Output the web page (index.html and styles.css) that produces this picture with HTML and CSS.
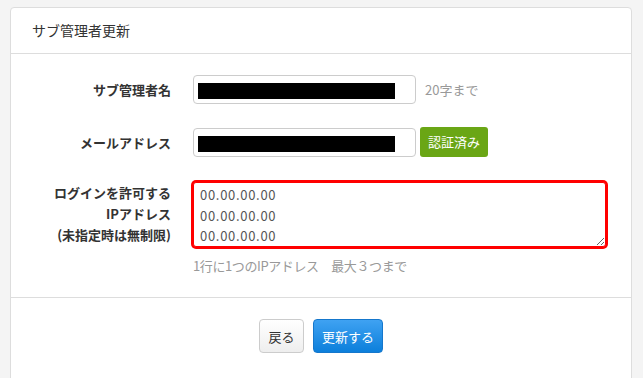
FILE: index.html
```html
<!DOCTYPE html>
<html lang="ja">
<head>
  <meta charset="UTF-8" />
  <meta name="viewport" content="width=device-width, initial-scale=1.0"/>
  <title>サブ管理者更新</title>
  <link rel="stylesheet" href="styles.css">
</head>
<body>
  <div class="panel">
    <div class="panel-heading">サブ管理者更新</div>

    <form class="panel-body">
      <div class="row">
        <label class="label">サブ管理者名</label>
        <div class="field">
          <div class="input"><span class="redacted"></span></div>
          <span class="note">20字まで</span>
        </div>
      </div>

      <div class="row">
        <label class="label">メールアドレス</label>
        <div class="field">
          <div class="input"><span class="redacted"></span></div>
          <span class="badge-ok">認証済み</span>
        </div>
      </div>

      <div class="row row-top">
        <label class="label multi">ログインを許可する<br>IPアドレス<br>(未指定時は無制限)</label>
        <div class="field-col">
          <textarea class="ip-list">00.00.00.00
00.00.00.00
00.00.00.00</textarea>
          <p class="help">1行に1つのIPアドレス　最大３つまで</p>
        </div>
      </div>
    </form>

    <div class="panel-footer">
      <button class="btn btn-default" type="button">戻る</button>
      <button class="btn btn-primary" type="submit">更新する</button>
    </div>
  </div>
</body>
</html>
```

FILE: styles.css
```css
body {
  margin: 0;
  padding: 7px 0 0 10px;
  background: #f4f4f4;
  font-family: "Noto Sans CJK JP", "Noto Sans", sans-serif;
  font-size: 13px;
  color: #333;
}
.panel {
  width: 620px;
  height: 420px;
  background: #fff;
  border: 1px solid #ddd;
  border-radius: 4px;
}
.panel-heading {
  height: 45px;
  line-height: 45px;
  padding-left: 21px;
  font-size: 14px;
  border-bottom: 1px solid #ddd;
}
.panel-body {
  padding: 21px 0 0 0;
}
.row {
  display: grid;
  grid-template-columns: 160px 1fr;
  column-gap: 22px;
  align-items: center;
  margin-bottom: 23px;
}
.row-top {
  align-items: start;
  margin-bottom: 0;
}
.label {
  text-align: right;
  font-weight: bold;
}
.label.multi {
  line-height: 21px;
  padding-top: 2px;
}
.field {
  display: flex;
  align-items: center;
  gap: 4px;
}
.input {
  box-sizing: border-box;
  width: 223px;
  height: 29px;
  border: 1px solid #ccc;
  border-radius: 4px;
  padding: 7px 0 0 4px;
}
.redacted {
  display: block;
  width: 197px;
  height: 16px;
  background: #000;
}
.note {
  margin-left: 5px;
  color: #999;
}
.badge-ok {
  display: inline-block;
  width: 68px;
  height: 30px;
  line-height: 30px;
  text-align: center;
  background: #6aa615;
  color: #fff;
  border-radius: 3px;
}
.field-col {
  padding-top: 2px;
}
.ip-list {
  display: block;
  box-sizing: border-box;
  width: 413px;
  height: 65px;
  margin: 0;
  padding: 2px 6px;
  font-family: inherit;
  font-size: 13px;
  line-height: 20.5px;
  letter-spacing: 0.7px;
  color: #555;
  border: 1px solid #f00;
  box-shadow: 0 0 0 2px #f00;
  border-radius: 3px;
  resize: vertical;
  overflow: hidden;
}
.help {
  margin: 9px 0 0 0;
  letter-spacing: -0.4px;
  color: #999;
}
.panel-footer {
  margin-top: 22px;
  border-top: 1px solid #ddd;
  padding-top: 21px;
  display: flex;
  justify-content: center;
  gap: 9px;
}
.btn {
  height: 34px;
  padding: 0;
  font-family: inherit;
  font-size: 13px;
  border-radius: 4px;
  cursor: pointer;
}
.btn-default {
  width: 45px;
  color: #333;
  background: linear-gradient(#fff, #eee);
  border: 1px solid #ccc;
}
.btn-primary {
  width: 70px;
  color: #fff;
  background: linear-gradient(#3fa2f2, #0c7fdb);
  border: 1px solid #1577cc;
}
```
